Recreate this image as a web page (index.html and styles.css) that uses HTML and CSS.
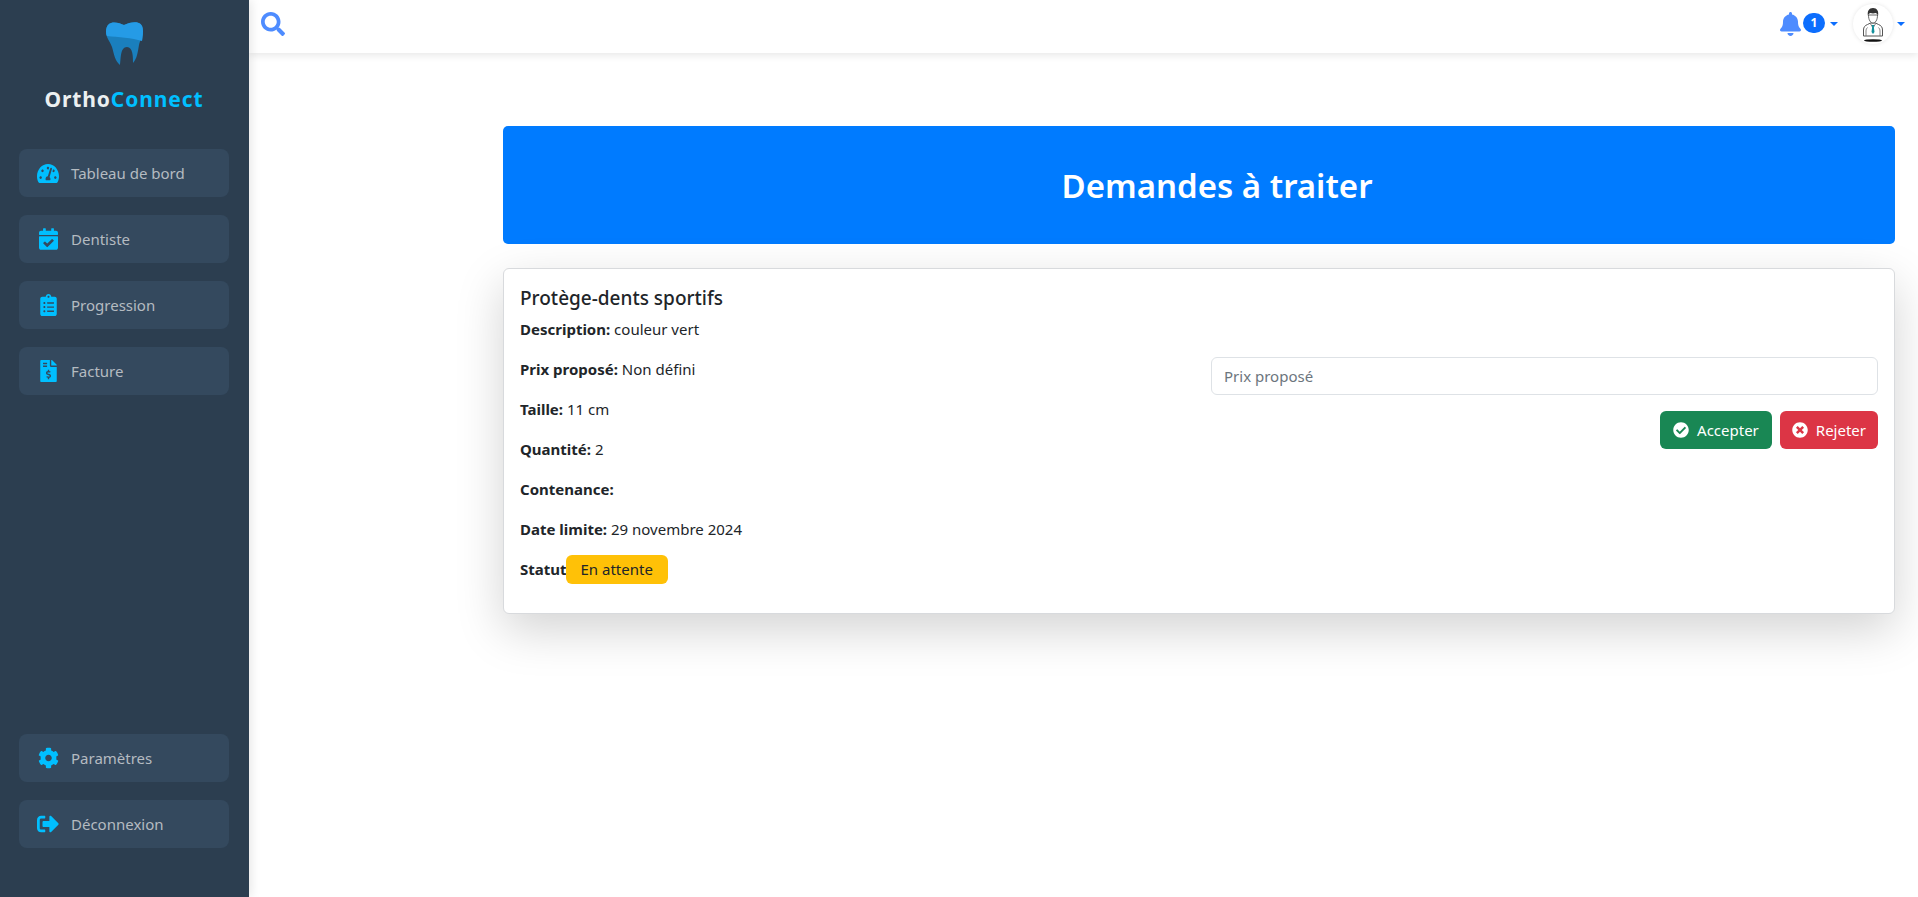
FILE: index.html
```html
<!doctype html>
<html lang="fr">

<head>
	<meta charset="utf-8">
	<title>OrthoConnect</title>
	<link rel="stylesheet" href="styles.css">
</head>

<body>
	<aside class="sidebar">
		<div class="brand">
			<svg class="tooth" viewBox="0 0 37 44" width="37" height="44">
				<path fill="#1a7fbd" d="M18 4C12 1 0-2 0 11c0 6 4 9 6 15 2 7 3 14 8 18 1-6 0-18 7-18 6 0 6 10 6 16 4-4 5-12 6-18 1-5 4-8 4-14C37-2 25 1 18 4z" />
				<path fill="#259be6" d="M18 4C12 1 0-2 0 11c0 2 .5 3 1 4 11 1 25 2 35 5 .5-2 1-5 1-10C37-2 25 1 18 4z" />
			</svg>
			<div class="brandName">Ortho<span>Connect</span></div>
		</div>
		<nav class="navList">
			<a class="navItem" href="#">
				<span class="navIcon"><svg width="22" height="19" viewBox="0 32 576 448" preserveAspectRatio="none"><path d="M288 32C128.94 32 0 160.94 0 320c0 52.8 14.25 102.26 39.06 144.8 5.61 9.62 16.3 15.2 27.44 15.2h443c11.14 0 21.83-5.58 27.44-15.2C561.75 422.26 576 372.8 576 320c0-159.06-128.94-288-288-288zm0 64c14.71 0 26.58 10.13 30.32 23.65-1.11 2.26-2.64 4.23-3.45 6.67l-9.22 27.67c-5.13 3.49-10.97 6.01-17.64 6.01-17.67 0-32-14.33-32-32S270.33 96 288 96zM96 384c-17.67 0-32-14.33-32-32s14.33-32 32-32 32 14.33 32 32-14.33 32-32 32zm48-160c-17.67 0-32-14.33-32-32s14.33-32 32-32 32 14.33 32 32-14.33 32-32 32zm246.77-72.41l-61.33 184C343.13 347.33 352 364.54 352 384c0 11.72-3.38 22.55-8.88 32H232.88c-5.5-9.45-8.88-20.28-8.88-32 0-33.94 26.5-61.43 59.9-63.59l61.34-184.01c4.17-12.56 17.73-19.45 30.36-15.17 12.57 4.19 19.35 17.79 15.17 30.36zm14.66 57.2l15.52-46.55c3.47-1.29 7.13-2.23 11.05-2.23 17.67 0 32 14.33 32 32s-14.33 32-32 32c-11.38-.01-20.89-6.28-26.57-15.22zM480 384c-17.67 0-32-14.33-32-32s14.33-32 32-32 32 14.33 32 32-14.33 32-32 32z" /></svg></span>
				Tableau de bord
			</a>
			<a class="navItem" href="#">
				<span class="navIcon"><svg width="19" height="22" viewBox="0 0 448 512"><path d="M436 160H12c-6.627 0-12-5.373-12-12v-36c0-26.51 21.49-48 48-48h48V12c0-6.627 5.373-12 12-12h40c6.627 0 12 5.373 12 12v52h128V12c0-6.627 5.373-12 12-12h40c6.627 0 12 5.373 12 12v52h48c26.51 0 48 21.49 48 48v36c0 6.627-5.373 12-12 12zM12 192h424c6.627 0 12 5.373 12 12v260c0 26.51-21.49 48-48 48H48c-26.51 0-48-21.49-48-48V204c0-6.627 5.373-12 12-12zm333.296 95.947l-28.169-28.398c-4.667-4.705-12.265-4.736-16.97-.068L194.12 364.665l-45.98-46.352c-4.667-4.705-12.266-4.736-16.971-.068l-28.397 28.17c-4.705 4.667-4.736 12.265-.068 16.97l82.601 83.269c4.667 4.705 12.265 4.736 16.97.068l142.953-141.805c4.705-4.667 4.736-12.265.068-16.97z" /></svg></span>
				Dentiste
			</a>
			<a class="navItem" href="#">
				<span class="navIcon"><svg width="17" height="22" viewBox="0 0 384 512"><path d="M336 64h-80c0-35.3-28.7-64-64-64s-64 28.7-64 64H48C21.5 64 0 85.5 0 112v352c0 26.5 21.5 48 48 48h288c26.5 0 48-21.5 48-48V112c0-26.5-21.5-48-48-48zM96 424c-13.3 0-24-10.7-24-24s10.7-24 24-24 24 10.7 24 24-10.7 24-24 24zm0-96c-13.3 0-24-10.7-24-24s10.7-24 24-24 24 10.7 24 24-10.7 24-24 24zm0-96c-13.3 0-24-10.7-24-24s10.7-24 24-24 24 10.7 24 24-10.7 24-24 24zm96-192c13.3 0 24 10.7 24 24s-10.7 24-24 24-24-10.7-24-24 10.7-24 24-24zm128 368c0 4.4-3.6 8-8 8H168c-4.4 0-8-3.6-8-8v-16c0-4.4 3.6-8 8-8h144c4.4 0 8 3.6 8 8v16zm0-96c0 4.4-3.6 8-8 8H168c-4.4 0-8-3.6-8-8v-16c0-4.4 3.6-8 8-8h144c4.4 0 8 3.6 8 8v16zm0-96c0 4.4-3.6 8-8 8H168c-4.4 0-8-3.6-8-8v-16c0-4.4 3.6-8 8-8h144c4.4 0 8 3.6 8 8v16z" /></svg></span>
				Progression
			</a>
			<a class="navItem" href="#">
				<span class="navIcon"><svg width="17" height="22" viewBox="0 0 384 512"><path d="M377 105L279.1 7c-4.5-4.5-10.6-7-17-7H256v128h128v-6.1c0-6.3-2.5-12.4-7-16.9zm-153 31V0H24C10.7 0 0 10.7 0 24v464c0 13.3 10.7 24 24 24h336c13.3 0 24-10.7 24-24V160H248c-13.2 0-24-10.8-24-24zM64 72c0-4.42 3.58-8 8-8h80c4.42 0 8 3.58 8 8v16c0 4.42-3.58 8-8 8H72c-4.42 0-8-3.58-8-8V72zm0 80v-16c0-4.42 3.58-8 8-8h80c4.42 0 8 3.58 8 8v16c0 4.42-3.58 8-8 8H72c-4.42 0-8-3.58-8-8zm144 263.88V440c0 4.42-3.58 8-8 8h-16c-4.42 0-8-3.58-8-8v-24.29c-11.29-.58-22.27-4.52-31.37-11.35-3.9-2.93-4.1-8.77-.57-12.14l11.75-11.21c2.77-2.64 6.89-2.76 10.13-.73 3.87 2.42 8.26 3.72 12.82 3.72h28.11c6.5 0 11.8-5.92 11.8-13.19 0-5.95-3.61-11.19-8.77-12.73l-45-13.5c-18.59-5.58-31.58-23.42-31.58-43.39 0-24.52 19.05-44.44 42.67-45.07V232c0-4.42 3.58-8 8-8h16c4.42 0 8 3.58 8 8v24.29c11.29.58 22.27 4.51 31.37 11.35 3.9 2.93 4.1 8.77.57 12.14l-11.75 11.21c-2.77 2.64-6.89 2.76-10.13.73-3.87-2.43-8.26-3.72-12.82-3.72h-28.11c-6.5 0-11.8 5.92-11.8 13.19 0 5.95 3.61 11.19 8.77 12.73l45 13.5c18.59 5.58 31.58 23.42 31.58 43.39 0 24.53-19.05 44.44-42.67 45.07z" /></svg></span>
				Facture
			</a>
		</nav>
		<nav class="navList navBottom">
			<a class="navItem" href="#">
				<span class="navIcon"><svg width="21" height="22" viewBox="0 0 512 512"><path d="M487.4 315.7l-42.6-24.6c4.3-23.2 4.3-47 0-70.2l42.6-24.6c4.9-2.8 7.1-8.6 5.5-14-11.1-35.6-30-67.8-54.7-94.6-3.8-4.1-10-5.1-14.8-2.3L380.8 110c-17.9-15.4-38.5-27.3-60.8-35.1V25.8c0-5.6-3.9-10.5-9.4-11.7-36.7-8.2-74.3-7.8-109.2 0-5.5 1.2-9.4 6.1-9.4 11.7V75c-22.2 7.9-42.8 19.8-60.8 35.1L88.7 85.5c-4.9-2.8-11-1.9-14.8 2.3-24.7 26.7-43.6 58.9-54.7 94.6-1.7 5.4.6 11.2 5.5 14L67.3 221c-4.3 23.2-4.3 47 0 70.2l-42.6 24.6c-4.9 2.8-7.1 8.6-5.5 14 11.1 35.6 30 67.8 54.7 94.6 3.8 4.1 10 5.1 14.8 2.3l42.6-24.6c17.9 15.4 38.5 27.3 60.8 35.1v49.2c0 5.6 3.9 10.5 9.4 11.7 36.7 8.2 74.3 7.8 109.2 0 5.5-1.2 9.4-6.1 9.4-11.7v-49.2c22.2-7.9 42.8-19.8 60.8-35.1l42.6 24.6c4.9 2.8 11 1.9 14.8-2.3 24.7-26.7 43.6-58.9 54.7-94.6 1.5-5.5-.7-11.3-5.6-14.1zM256 336c-44.1 0-80-35.9-80-80s35.9-80 80-80 80 35.9 80 80-35.9 80-80 80z" /></svg></span>
				Paramètres
			</a>
			<a class="navItem" href="#">
				<span class="navIcon"><svg width="22" height="22" viewBox="0 0 512 512"><path d="M497 273L329 441c-15 15-41 4.5-41-17v-96H152c-13.3 0-24-10.7-24-24v-96c0-13.3 10.7-24 24-24h136V88c0-21.4 25.9-32 41-17l168 168c9.3 9.4 9.3 24.6 0 34zM192 436v-40c0-6.6-5.4-12-12-12H96c-17.7 0-32-14.3-32-32V160c0-17.7 14.3-32 32-32h84c6.6 0 12-5.4 12-12V76c0-6.6-5.4-12-12-12H96c-53 0-96 43-96 96v192c0 53 43 96 96 96h84c6.6 0 12-5.4 12-12z" /></svg></span>
				Déconnexion
			</a>
		</nav>
	</aside>

	<div class="mainCol">
		<header class="topbar">
			<svg class="searchIcon" width="24" height="24" viewBox="0 0 512 512"><path d="M505 442.7L405.3 343c-4.5-4.5-10.6-7-17-7H372c27.6-35.3 44-79.7 44-128C416 93.1 322.9 0 208 0S0 93.1 0 208s93.1 208 208 208c48.3 0 92.7-16.4 128-44v16.3c0 6.4 2.5 12.5 7 17l99.7 99.7c9.4 9.4 24.6 9.4 33.9 0l28.3-28.3c9.4-9.4 9.4-24.6.1-34zM208 336c-70.7 0-128-57.2-128-128 0-70.7 57.2-128 128-128 70.7 0 128 57.2 128 128 0 70.7-57.2 128-128 128z" /></svg>
			<div class="topRight">
				<div class="notif">
					<svg class="bellIcon" width="21" height="24" viewBox="0 0 448 512"><path d="M224 512c35.32 0 63.97-28.65 63.97-64H160.03c0 35.35 28.65 64 63.97 64zm215.39-149.71c-19.32-20.76-55.47-51.99-55.47-154.29 0-77.7-54.48-139.9-127.94-155.16V32c0-17.67-14.32-32-31.98-32s-31.98 14.33-31.98 32v20.84C118.56 68.1 64.08 130.3 64.08 208c0 102.3-36.15 133.53-55.47 154.29-6 6.45-8.66 14.16-8.61 21.71.11 16.4 12.98 32 32.1 32h383.8c19.12 0 32-15.6 32.1-32 .05-7.55-2.61-15.27-8.61-21.71z" /></svg>
					<span class="countBadge">1</span>
					<span class="caret"></span>
				</div>
				<div class="profile">
					<div class="avatar">
						<svg width="40" height="40" viewBox="0 0 40 40">
							<path fill="#fff" stroke="#555" stroke-width="1" d="M10.500 32v-6c0-3 1.500-4.500 4-5.500l3-1.500h5l3 1.500c2.500 1 4 2.500 4 5.500v6z" />
							<path fill="none" stroke="#777" stroke-width=".9" d="M13 32v-5c0-1.500.5-2.500 1.500-3.500M27 32v-5c0-1.500-.5-2.500-1.500-3.500M17 19l3 5 3-5" />
							<path fill="#12909c" d="M18.800 21h2.400l-.4 2 .7 5-1.500 2-1.500-2 .7-5z" />
							<path fill="#fff" stroke="#555" stroke-width=".9" d="M15.500 11c0 5 2 8 4.500 8s4.500-3 4.500-8z" />
							<path fill="#333" d="M15 12c-1-5 1-8 5-8s6 3 5 8c-.5-2-1.500-3-2.500-3-1.500.6-3.500.6-5 0-1 0-2 1-2.500 3z" />
							<ellipse cx="20" cy="36.500" rx="9" ry="1.300" fill="#111" />
						</svg>
					</div>
					<span class="caret"></span>
				</div>
			</div>
		</header>

		<main class="content">
			<div class="banner">
				<h1>Demandes à traiter</h1>
			</div>

			<section class="requestCard">
				<h5>Protège-dents sportifs</h5>
				<div class="requestRow">
					<div class="requestInfo">
						<p><strong>Description:</strong> couleur vert</p>
						<p><strong>Prix proposé:</strong> Non défini</p>
						<p><strong>Taille:</strong> 11 cm</p>
						<p><strong>Quantité:</strong> 2</p>
						<p><strong>Contenance:</strong></p>
						<p><strong>Date limite:</strong> 29 novembre 2024</p>
						<p class="statusLine"><strong>Statut</strong><span class="statusBadge">En attente</span></p>
					</div>
					<div class="requestActions">
						<input class="priceInput" type="text" placeholder="Prix proposé">
						<div class="actionBtns">
							<button class="btn btnAccept">
								<svg width="16" height="16" viewBox="0 0 512 512"><path d="M504 256c0 136.967-111.033 248-248 248S8 392.967 8 256 119.033 8 256 8s248 111.033 248 248zM227.314 387.314l184-184c6.248-6.248 6.248-16.379 0-22.627l-22.627-22.627c-6.248-6.249-16.379-6.249-22.628 0L216 308.118l-70.059-70.059c-6.248-6.248-16.379-6.248-22.628 0l-22.627 22.627c-6.248 6.248-6.248 16.379 0 22.627l104 104c6.249 6.249 16.379 6.249 22.628.001z" /></svg>
								Accepter
							</button>
							<button class="btn btnReject">
								<svg width="16" height="16" viewBox="0 0 512 512"><path d="M256 8C119 8 8 119 8 256s111 248 248 248 248-111 248-248S393 8 256 8zm121.600 313.100c4.700 4.700 4.700 12.300 0 17L338 377.600c-4.700 4.700-12.300 4.700-17 0L256 312l-65.100 65.600c-4.700 4.700-12.300 4.700-17 0L134.400 338c-4.700-4.700-4.700-12.300 0-17l65.600-65-65.600-65.100c-4.700-4.700-4.700-12.300 0-17l39.600-39.600c4.700-4.700 12.300-4.700 17 0l65 65.700 65.100-65.600c4.700-4.700 12.300-4.700 17 0l39.600 39.600c4.700 4.700 4.700 12.300 0 17L312 256l65.600 65.100z" /></svg>
								Rejeter
							</button>
						</div>
					</div>
				</div>
			</section>
		</main>
	</div>
</body>

</html>
```

FILE: styles.css
```css
* {
	box-sizing: border-box;
}

body {
	margin: 0;
	display: flex;
	height: 897px;
	overflow: hidden;
	font-family: 'Noto Sans', sans-serif;
	font-size: 15px;
	line-height: 24px;
	color: #212529;
	background-color: #fff;
}

/* sidebar */
.sidebar {
	position: relative;
	z-index: 2;
	flex: 0 0 249px;
	display: flex;
	flex-direction: column;
	padding: 21px 20px 49px 19px;
	background-color: #2c3e50;
	box-shadow: 2px 0 10px rgba(0, 0, 0, 0.1);
}

.brand {
	display: flex;
	flex-direction: column;
	align-items: center;
	margin-bottom: 35px;
}

.brandName {
	margin-top: 19px;
	font-size: 21px;
	line-height: 30px;
	font-weight: 700;
	letter-spacing: 0.9px;
	color: #ecf0f1;
}

.brandName span {
	color: #00bfff;
}

.navList {
	display: flex;
	flex-direction: column;
	gap: 18px;
}

.navBottom {
	margin-top: auto;
}

.navItem {
	display: flex;
	align-items: center;
	gap: 12px;
	height: 48px;
	padding-left: 18px;
	border-radius: 8px;
	background-color: #34495e;
	color: #b4bbc1;
	text-decoration: none;
}

.navIcon {
	display: flex;
	justify-content: center;
	width: 22px;
	fill: #00bfff;
}

/* top bar */
.mainCol {
	flex: 1;
	min-width: 0;
}

.topbar {
	display: flex;
	align-items: center;
	justify-content: space-between;
	height: 53px;
	padding: 0 13px 5px 12px;
	background-color: #fff;
	box-shadow: 0 2px 8px rgba(0, 0, 0, 0.1);
}

.searchIcon {
	fill: #4e8cff;
}

.topRight {
	display: flex;
	align-items: center;
	gap: 15px;
}

.notif,
.profile {
	display: flex;
	align-items: center;
}

.bellIcon {
	fill: #4e8cff;
}

.countBadge {
	display: flex;
	align-items: center;
	justify-content: center;
	width: 22px;
	height: 20px;
	margin: 0 5px 3px 2px;
	border-radius: 10px;
	background-color: #0d6efd;
	color: #fff;
	font-size: 12px;
	line-height: 1;
	font-weight: 700;
}

.caret {
	width: 0;
	height: 0;
	border-top: 4px solid #0d6efd;
	border-left: 4px solid transparent;
	border-right: 4px solid transparent;
}

.avatar {
	display: flex;
	align-items: center;
	justify-content: center;
	width: 40px;
	height: 40px;
	margin-right: 4px;
	border-radius: 50%;
	background-color: #fff;
	box-shadow: 0 0 4px rgba(0, 0, 0, 0.1);
}

/* content */
.content {
	padding: 73px 23px 0 254px;
}

.banner {
	display: flex;
	align-items: center;
	justify-content: center;
	height: 118px;
	padding: 1px 0 0 36px;
	border-radius: 5px;
	background-color: #007bff;
}

.banner h1 {
	margin: 0;
	font-size: 33px;
	line-height: 38px;
	font-weight: 600;
	color: #fff;
}

.requestCard {
	margin-top: 24px;
	padding: 16px;
	border: 1px solid #d8dadd;
	border-radius: 6px;
	background-color: #fff;
	box-shadow: 0 16px 48px rgba(0, 0, 0, 0.175);
}

.requestCard h5 {
	margin: 0 0 7px;
	padding-top: 1px;
	font-size: 19px;
	line-height: 24px;
	font-weight: 500;
}

.requestRow {
	display: flex;
	gap: 24px;
}

.requestInfo,
.requestActions {
	flex: 1 1 0;
}

.requestInfo p {
	margin: 0 0 16px;
}

.statusLine {
	display: flex;
	align-items: center;
	height: 24px;
}

.statusBadge {
	display: flex;
	align-items: center;
	height: 29px;
	margin-left: -1px;
	padding: 0 15px;
	border-radius: 6px;
	background-color: #ffc107;
}

.requestActions {
	padding-top: 40px;
}

.priceInput {
	display: block;
	width: 100%;
	height: 38px;
	margin-bottom: 16px;
	padding: 6px 12px;
	border: 1px solid #dee2e6;
	border-radius: 6px;
	font: inherit;
	color: #212529;
}

.priceInput::placeholder {
	color: #6c757d;
}

.actionBtns {
	display: flex;
	justify-content: flex-end;
	gap: 8px;
}

.btn {
	display: flex;
	align-items: center;
	gap: 8px;
	height: 38px;
	padding: 0 13px;
	border: 0;
	border-radius: 6px;
	font: inherit;
	color: #fff;
	fill: #fff;
}

.btnAccept {
	background-color: #198754;
}

.btnReject {
	padding: 0 12px;
	background-color: #dc3545;
}
```
